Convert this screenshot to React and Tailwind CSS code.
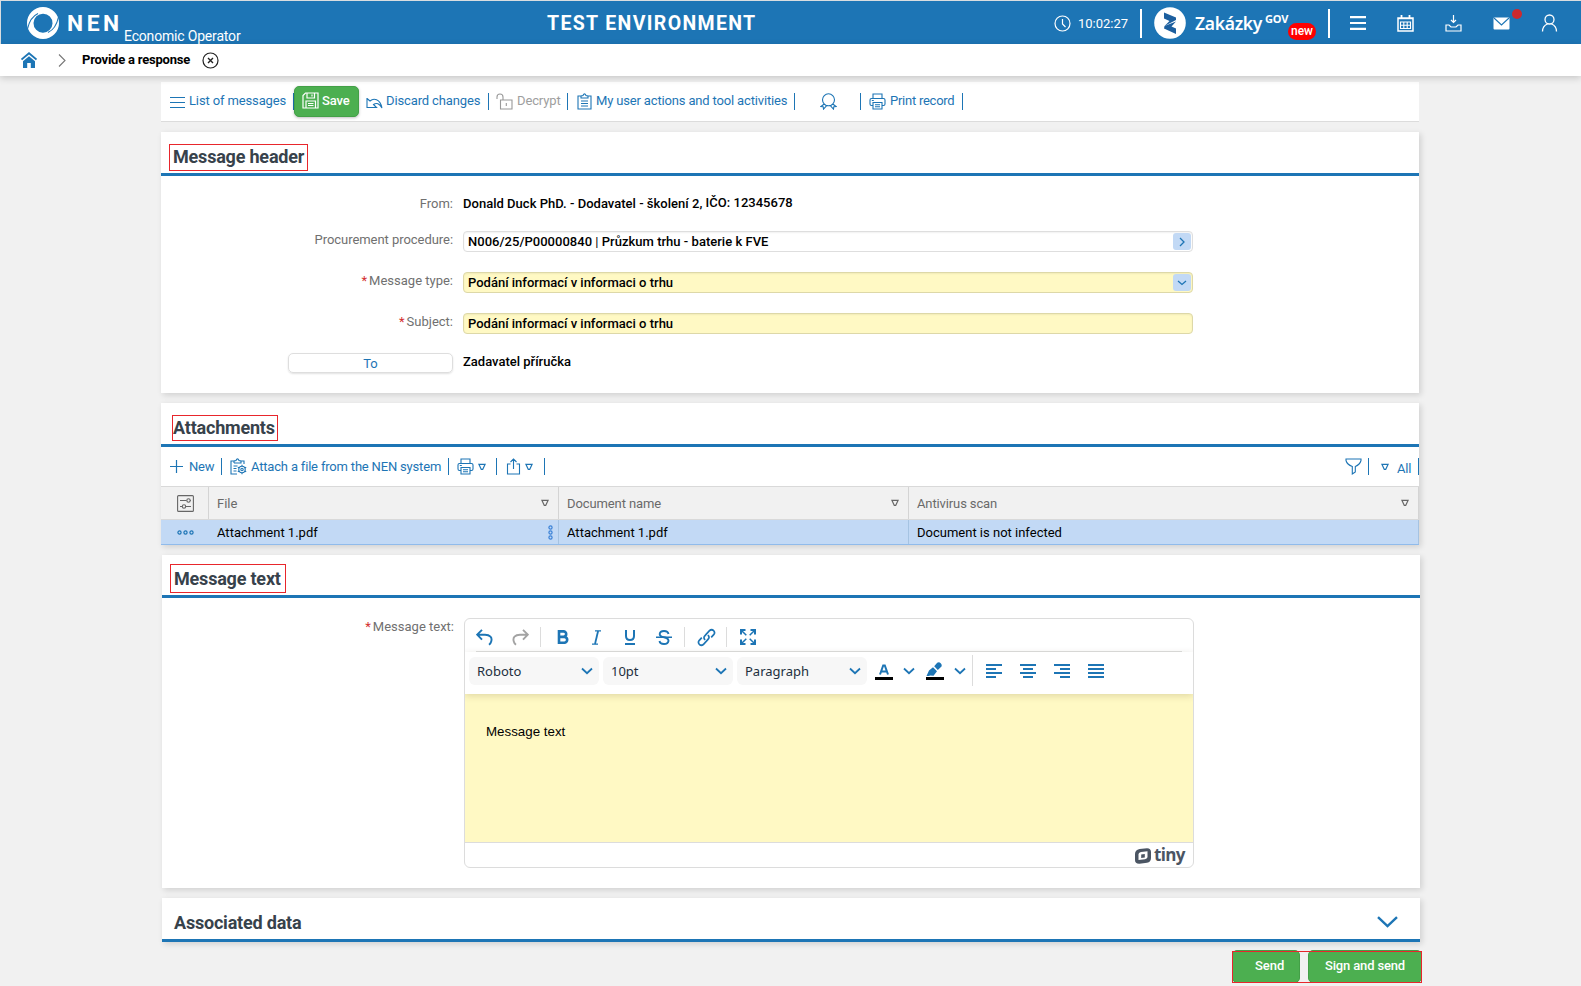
import React from "react";

const BLUE = "#1d75b5";

function Icon({ w, h, color = BLUE, sw = 1.2, className = "", children }) {
  return (
    <svg
      width={w}
      height={h}
      viewBox={`0 0 ${w} ${h}`}
      fill="none"
      stroke={color}
      strokeWidth={sw}
      className={`block shrink-0 ${className}`}
    >
      {children}
    </svg>
  );
}

const Sep = ({ className = "" }) => <div className={`h-[17px] w-px shrink-0 bg-[#1d75b5] ${className}`} />;

const Triangle = ({ color = BLUE, className = "" }) => (
  <Icon w={8} h={8} color={color} className={className}>
    <path d="M.9 1.300h6.200L4.700 6.400H3.300z" />
  </Icon>
);

const Printer = () => (
  <Icon w={17} h={17} sw={1.1}>
    <path d="M4 5.500V1h9v4.500M4 12.500H2.500Q1 12.500 1 11V7Q1 5.500 2.500 5.500h12Q16 5.500 16 7v4q0 1.500-1.500 1.500H13M4 9.500h9V16H4zM6 11.800h5M6 13.800h5M2.800 7.500h2" />
  </Icon>
);

const Chevron = ({ className = "" }) => (
  <Icon w={12} h={8} sw={1.8} className={className}>
    <path d="M1 1.500l5 4.700 5-4.700" />
  </Icon>
);

function TopBar() {
  return (
    <header className="flex h-[44px] items-start border-t border-l border-[#d9dde0] bg-[#1d75b5] text-white">
      <Icon w={34} h={34} className="mt-[5px] ml-[25px]" sw={0}>
        <path
          fill="#fff"
          fillRule="evenodd"
          d="M17 1a16 16 0 1 0 0 32a16 16 0 1 0 0-32zM17.200 7.700a9.500 9.500 0 1 1-.4 19a9.500 9.500 0 1 1 .4-19z"
        />
        <path d="M1.500 23C3 16 5.500 10.500 12 7.500M32.500 11C31 18 28.500 23.500 22 26.500" stroke={BLUE} strokeWidth="1.100" />
      </Icon>
      <div className="mt-[8px] ml-[7px] w-[57px] text-[22.800px] leading-[30px] font-bold tracking-[3.600px]">NEN</div>
      <div className="mt-[26px] w-[423px] text-[14px] leading-[19px] tracking-[-0.180px]">Economic Operator</div>
      <div className="mt-[9px] w-[507px] text-[19.500px] leading-[28px] font-bold tracking-[1.350px] whitespace-nowrap">TEST ENVIRONMENT</div>
      <Icon w={17} h={17} color="#fff" className="mt-[14px]">
        <circle cx="8.500" cy="8.500" r="7.500" />
        <path d="M8.500 4v5l3 3" />
      </Icon>
      <div className="mt-[13px] ml-[7px] w-[62px] text-[13px] leading-[20px]">10:02:27</div>
      <div className="mt-[8px] h-[29px] w-[2px] bg-white" />
      <Icon w={32} h={32} className="mt-[6px] ml-[12px]" sw={0}>
        <circle cx="16" cy="16" r="15.800" fill="#fff" />
        <path d="M10 5.500l12 5v2.500l-11.500 6L15.500 14 10 11.500zM10.500 19L22 14.500l-4.500 5 4.500 2V27l-12-5.500z" fill="#1c5f9f" />
      </Icon>
      <div className="mt-[9px] ml-[9px] w-[70px] font-['Noto_Sans'] text-[17.500px] leading-[26px] font-semibold tracking-[-0.300px]">Zakázky</div>
      <div className="mt-[10px] w-[24px] font-['Noto_Sans'] text-[11px] leading-[16px] font-bold tracking-[-0.200px]">GOV</div>
      <div className="mt-[22px] -ml-px w-[28px] rounded-full bg-[#f00] text-center text-[12px] leading-[17px] font-medium">new</div>
      <div className="mt-[8px] ml-[12px] h-[29px] w-[2px] bg-white" />
      <Icon w={16} h={16} color="#fff" sw={2.200} className="mt-[14px] ml-[20px]">
        <path d="M0 2.200h16M0 8h16M0 13.800h16" />
      </Icon>
      <Icon w={17} h={17} color="#fff" sw={1.100} className="mt-[14px] ml-[31px]">
        <path d="M1 3h15v13H1zM1 3.500h15" strokeWidth="1.500" />
        <path d="M4.500 0v3M12.500 0v3" strokeWidth="1.800" />
        <path d="M3.500 7h10v6.500h-10zM3.500 10.200h10M6.800 7v6.500M10.200 7v6.500" />
      </Icon>
      <Icon w={17} h={17} color="#fff" sw={1.200} className="mt-[14px] ml-[31px]">
        <path d="M8.500 0v7.500M6 5l2.500 2.500L11 5M1 10h3l2 2h5l2-2h3v6H1z" />
      </Icon>
      <div className="relative mt-[16px] ml-[31px]">
        <Icon w={17} h={13} sw={1.100}>
          <rect x=".5" y=".5" width="16" height="12" rx="1" fill="#fff" stroke="none" />
          <path d="M1 1l7.500 7L16 1" />
        </Icon>
        <div className="absolute -top-[8px] left-[19px] size-[10px] rounded-full bg-[#cd2a2f]" />
      </div>
      <Icon w={17} h={18} color="#fff" sw={1.300} className="mt-[13px] ml-[31px]">
        <circle cx="8.500" cy="5.500" r="4.500" />
        <path d="M1.500 17.500c0-4 2.500-6.500 5-7.500M15.500 17.500c0-4-2.500-6.500-5-7.500" />
      </Icon>
    </header>
  );
}

function Breadcrumb() {
  return (
    <nav className="relative flex h-[32px] items-center bg-white shadow-[0_2px_7px_rgba(0,0,0,0.18)]">
      <Icon w={16} h={16} className="ml-[21px]" sw={1.800}>
        <path d="M.5 7.500L8 1.200l7.500 6.300" />
        <path d="M8 4.300l6 5V16H9.800v-5H6.200v5H2V9.300z" fill={BLUE} stroke="none" />
      </Icon>
      <Icon w={8} h={13} color="#777" sw={1.100} className="ml-[21px]">
        <path d="M1 .5l6 6-6 6" />
      </Icon>
      <div className="ml-[16px] w-[120px] text-[13px] font-bold tracking-[-0.220px] whitespace-nowrap text-black">Provide a response</div>
      <Icon w={17} h={17} color="#222" sw={1.200}>
        <circle cx="8.500" cy="8.500" r="7.500" />
        <path d="M6 6l5 5M11 6l-5 5" strokeWidth="1.400" />
      </Icon>
    </nav>
  );
}

function RecordToolbar() {
  return (
    <div className="mt-[6px] flex h-[40px] w-[1258px] items-center border-b border-[#dcdcdc] bg-white pb-[1px] text-[13px] tracking-[-0.130px] whitespace-nowrap text-[#1d75b5]">
      <Icon w={15} h={12} className="mt-px ml-[9px]">
        <path d="M0 1.500h15M0 6.500h15M0 11.500h15" />
      </Icon>
      <div className="ml-[4px] w-[104px]">List of messages</div>
      <Sep />
      <div className="flex h-[31px] w-[65px] items-center rounded-[5px] border border-[#43a047] bg-[#4caf50] pl-[7px] font-medium text-white shadow-[0_1px_3px_rgba(0,0,0,0.25)]">
        <Icon w={17} h={17} color="#fff" sw={1.200} className="-mt-[2px]">
          <path d="M3.500 1H16v15H1V3.500zM5 1v5h7.500V1M10 2.500v2M4 16V9h9.500v7M6 11.500h5.500M6 13.500h5.500" />
        </Icon>
        <span className="ml-[3px]">Save</span>
      </div>
      <Icon w={17} h={12} sw={1.100} className="mt-[3px] ml-[7px]">
        <path d="M1 1v9.500h6M1 1.500l3 2.500C7.500 1 14 1.500 16 11 13.500 6.500 10.500 5.500 7.500 7.500L10.500 10.500H7" />
      </Icon>
      <div className="ml-[3px] w-[102px]">Discard changes</div>
      <Sep />
      <Icon w={17} h={17} color="#999" sw={1.100} className="ml-[7px]">
        <path d="M4.500 7h11.500v9H4.500zM7 7V4q0-3-3-3T1 4v2M10.300 10v3" />
      </Icon>
      <div className="ml-[4px] w-[50px] text-[#9e9e9e]">Decrypt</div>
      <Sep />
      <Icon w={15} h={17} sw={1.100} className="ml-[9px]">
        <path d="M4 3H1v13h13V3h-3M4 5V3l2-.5Q7.500-.8 9 2.500l2 .5v2zM4 8h7M4 10.500h7M4 13h7" />
      </Icon>
      <div className="ml-[4px] w-[198px] tracking-[-0.160px]">My user actions and tool activities</div>
      <Sep />
      <Icon w={17} h={17} sw={1.100} className="ml-[25px]">
        <path d="M4.200 11A6 6 0 1 1 12.800 11M4.200 11L1 13.500l2.200.3.300 2.300 3-3.300zM12.800 11L16 13.500l-2.200.3-.3 2.300-3-3.300zM5.800 12.300q2.700.900 5.400 0" />
      </Icon>
      <div className="w-[23px]" />
      <Sep />
      <div className="ml-[8px]"><Printer /></div>
      <div className="ml-[4px] w-[72px] tracking-[-0.250px]">Print record</div>
      <Sep />
    </div>
  );
}

function PanelTitle({ children, height = "h-[44px]", className = "" }) {
  return (
    <div className={`flex items-start border-b-[3px] border-[#1d75b5] ${height}`}>
      <h2 className={`border border-[#e8262c] text-[18px] font-bold tracking-[-0.200px] whitespace-nowrap text-[#37424b] ${className}`}>
        {children}
      </h2>
    </div>
  );
}

const PANEL = "w-[1258px] bg-white shadow-[2px_2px_6px_rgba(0,0,0,0.14)]";

const Label = ({ required, children, className = "" }) => (
  <div className={`w-[292px] shrink-0 text-right text-[13px] leading-[16px] text-[#707070] ${className}`}>
    {required && <span className="mr-[2px] text-[#d32f2f]">*</span>}
    {children}:
  </div>
);

function MessageHeader() {
  const field = "ml-[10px] flex h-[21px] w-[730px] items-center rounded-[4px] border pr-[1px] pl-[4px] text-[13px] font-medium text-black";
  return (
    <section className={`mt-[10px] h-[261px] ${PANEL}`}>
      <PanelTitle className="mt-[12px] ml-[8px] h-[27px] w-[139px] pl-[3px] leading-[24px]">Message header</PanelTitle>
      <div className="flex h-[55px] items-start pt-[20px]">
        <Label>From</Label>
        <div className="ml-[10px] text-[13px] leading-[16px] font-medium tracking-[0.020px] text-black">Donald Duck PhD. - Dodavatel - školení 2<span className="relative -top-px">, IČO: 12345678</span></div>
      </div>
      <div className="flex h-[41px] items-start">
        <Label className="mt-[1px] tracking-[-0.050px]">Procurement procedure</Label>
        <div className={`${field} border-[#dedede] shadow-[inset_0_1px_2px_rgba(0,0,0,0.06)]`}>
          <span className="grow tracking-[0.020px]">N006/25/P00000840 <span className="font-normal">|</span> Průzkum trhu - baterie k FVE</span>
          <div className="flex h-[17px] w-[18px] items-center justify-center rounded-[3px] bg-[#c2d9f5]">
            <Icon w={6} h={10} sw={1.300}><path d="M1 1l4 4-4 4" /></Icon>
          </div>
        </div>
      </div>
      <div className="flex h-[41px] items-start">
        <Label required className="mt-[1px]">Message type</Label>
        <div className={`${field} border-[#ddd8a8] bg-[#fff9c4] shadow-[inset_0_1px_2px_rgba(0,0,0,0.06)]`}>
          <span className="grow">Podání informací v informaci o trhu</span>
          <div className="flex h-[17px] w-[18px] items-center justify-center rounded-[3px] bg-[#c2d9f5]">
            <Icon w={10} h={6} sw={1.300}><path d="M1 1l4 3.500L9 1" /></Icon>
          </div>
        </div>
      </div>
      <div className="flex h-[40px] items-start">
        <Label required className="mt-[1px]">Subject</Label>
        <div className={`${field} border-[#ddd8a8] bg-[#fff9c4] shadow-[inset_0_1px_2px_rgba(0,0,0,0.06)]`}>Podání informací v informaci o trhu</div>
      </div>
      <div className="flex items-start">
        <div className="ml-[127px] flex h-[20px] w-[165px] items-center justify-center rounded-[5px] border border-[#dedede] pt-[2px] text-[13px] text-[#1d75b5] shadow-[0_1px_2px_rgba(0,0,0,0.12)]">To</div>
        <div className="mt-px ml-[10px] text-[13px] leading-[16px] font-medium text-black">Zadavatel příručka</div>
      </div>
    </section>
  );
}

function Attachments() {
  const head = "flex items-center border-r border-[#d4d4d4] pl-[8px] pr-[9px]";
  const cell = "flex items-center border-r border-[#a5c3e2] pl-[8px]";
  return (
    <section className={`mt-[10px] h-[142px] text-[13px] whitespace-nowrap ${PANEL}`}>
      <PanelTitle className="mt-[12px] ml-[11px] h-[26px] w-[106px] leading-[24px]">Attachments</PanelTitle>
      <div className="flex h-[39px] items-center tracking-[-0.150px] text-[#1d75b5]">
        <Icon w={13} h={13} className="ml-[9px]"><path d="M6.500 0v13M0 6.500h13" /></Icon>
        <div className="ml-[6px] w-[32px]">New</div>
        <Sep />
        <Icon w={17} h={17} sw={1.100} className="ml-[8px]">
          <path d="M4 3H1v13h6M4 5V3l2-.5Q7.500-.8 9 2.500l2 .5v2H4M11 3h3v3M3.500 8h4M3.500 10.500h3M3.500 13h3" />
          <circle cx="12" cy="11.500" r="3.200" />
          <circle cx="12" cy="11.500" r="1.200" />
          <path d="M12 6.800v1.500M12 14.700v1.500M7.800 9.200l1.500.8M14.700 13l1.500.8M7.800 13.800l1.500-.8M14.700 10l1.500-.8" />
        </Icon>
        <div className="ml-[4px] w-[197px] tracking-[-0.180px]">Attach a file from the NEN system</div>
        <Sep />
        <div className="ml-[8px]"><Printer /></div>
        <Triangle className="ml-[4px]" />
        <Sep className="ml-[10px]" />
        <Icon w={15} h={17} sw={1.100} className="ml-[9px]">
          <path d="M4.500 6H1.500v10h12V6h-3M7.500 11V1M4.500 4l3-3 3 3" />
        </Icon>
        <Triangle className="ml-[4px]" />
        <Sep className="ml-[11px]" />
        <div className="grow" />
        <Icon w={17} h={17} sw={1.100}>
          <path d="M1 1h15v1.500Q15 6.500 10.300 8.500V14l-3 2V8.500Q2 6.500 1 2.500z" />
        </Icon>
        <Sep className="ml-[6px]" />
        <Triangle className="ml-[12px]" />
        <div className="mt-[4px] ml-[8px] w-[21px]">All</div>
        <Sep />
      </div>
      <div className="grid h-[34px] w-[1258px] grid-cols-[48px_350px_350px_510px] border-t border-b border-[#d9d9d9] bg-[#f1f1f1] text-[#6a6a6a]">
        <div className="flex items-center justify-center border-r border-[#d4d4d4] pl-px">
          <Icon w={17} h={17} color="#666" sw={1.100}>
            <rect x=".6" y=".6" width="15.800" height="15.800" rx="1" />
            <path d="M3 5.500h6.500M13.200 5.500H14M3 11.500h2M8.500 11.500H14" />
            <circle cx="11.500" cy="5.500" r="1.700" />
            <circle cx="7" cy="11.500" r="1.700" />
          </Icon>
        </div>
        <div className={head}><span className="grow pt-[2px]">File</span><Triangle color="#666" /></div>
        <div className={head}><span className="grow pt-[2px] tracking-[-0.100px]">Document name</span><Triangle color="#666" /></div>
        <div className={head}><span className="grow pt-[2px] tracking-[-0.120px]">Antivirus scan</span><Triangle color="#666" /></div>
      </div>
      <div className="grid h-[25px] w-[1258px] grid-cols-[48px_350px_350px_510px] border-b border-[#90bbeb] bg-[#c2d9f5] text-black">
        <div className="flex items-center justify-center">
          <Icon w={17} h={5}>
            <circle cx="2.500" cy="2.500" r="1.600" />
            <circle cx="8.500" cy="2.500" r="1.600" />
            <circle cx="14.500" cy="2.500" r="1.600" />
          </Icon>
        </div>
        <div className={`${cell} pr-[5px]`}>
          <span className="grow pt-[2px]">Attachment 1.pdf</span>
          <Icon w={5} h={15} color="#3b82d6">
            <circle cx="2.500" cy="2.500" r="1.600" />
            <circle cx="2.500" cy="7.500" r="1.600" />
            <circle cx="2.500" cy="12.500" r="1.600" />
          </Icon>
        </div>
        <div className={`${cell} pt-[2px]`}>Attachment 1.pdf</div>
        <div className={`${cell} pt-[2px]`}>Document is not infected</div>
      </div>
    </section>
  );
}

const Select = ({ children }) => (
  <div className="mr-[4px] flex h-[28px] w-[130px] items-center rounded-[6px] bg-[#f7f7f7] pr-[6px] pl-[8px] font-['Noto_Sans'] text-[13px] text-[#222f3e]">
    <span className="grow pt-px">{children}</span>
    <Chevron />
  </div>
);

function Editor() {
  return (
    <div className="ml-[10px] flex h-[250px] w-[730px] flex-col overflow-hidden rounded-[6px] border border-[#dcdcdc] bg-white">
      <div className="mx-[11px] flex h-[33px] shrink-0 items-center border-b border-[#dedede] pt-[4px]">
        <Icon w={17} h={17} sw={1.900}>
          <path d="M6 .8L1.200 5.700 6 10.600M1.200 5.700H9c5 0 7.500 3 6.200 6.800-.3 1.300-1.200 2.500-2.200 3.200" />
        </Icon>
        <Icon w={17} h={17} color="#a3a3a3" sw={1.900} className="ml-[19px]">
          <path d="M11 .8l4.800 4.900L11 10.600M15.800 5.700H8c-5 0-7.500 3-6.200 6.800.3 1.300 1.200 2.500 2.200 3.200" />
        </Icon>
        <div className="ml-[11px] h-[20px] w-px bg-[#dcdcdc]" />
        <Icon w={12} h={14} sw={2.600} className="ml-[16px]">
          <path d="M2 1.400h4.500a2.700 2.700 0 0 1 0 5.400H2M2 6.900h5.300a2.900 2.900 0 0 1 0 5.800H2M2 .1v13.900" />
        </Icon>
        <Icon w={9} h={15} sw={1.300} className="ml-[23px]">
          <path d="M3 .9h6M0 14.100h6" />
          <path d="M6.100 1L3 14" strokeWidth="1.800" />
        </Icon>
        <Icon w={12} h={15} sw={2} className="ml-[23px]">
          <path d="M2 0v6q0 4 4 4t4-4V0M1 13.900h10" />
        </Icon>
        <Icon w={16} h={15} sw={1.900} className="ml-[20px]">
          <path d="M12.500 4Q12 1 8 1T3.700 4Q3.700 6.500 8 7.200T12.500 10.800Q12 14 8 14T3.500 11" />
          <path d="M0 7.300h16" strokeWidth="1.500" />
        </Icon>
        <div className="ml-[12px] h-[20px] w-px bg-[#dcdcdc]" />
        <Icon w={19} h={19} sw={1.700} className="ml-[12px]">
          <path d="M8.200 11.800q-2.500-2 0-4.500l4.500-4.800q2-1.600 4 .2 1.700 2 0 4l-2.500 2.600M10.800 7.200q2.500 2 0 4.500l-4.500 4.800q-2 1.600-4-.2-1.700-2 0-4l2.500-2.600" />
        </Icon>
        <div className="ml-[10px] h-[20px] w-px bg-[#dcdcdc]" />
        <Icon w={16} h={16} sw={2} className="ml-[13px]">
          <path d="M1 5.500V1h4.500M10.500 1H15v4.500M15 10.500V15h-4.500M5.500 15H1v-4.500" />
          <path d="M2 2l4.300 4.300M14 2L9.700 6.300M2 14l4.300-4.300M14 14L9.700 9.700" strokeWidth="1.500" />
        </Icon>
      </div>
      <div className="relative flex h-[42px] shrink-0 items-start pt-[5px] pl-[4px] shadow-[0_2px_7px_rgba(60,50,0,0.16)]">
        <Select>Roboto</Select>
        <Select>10pt</Select>
        <Select>Paragraph</Select>
        <Icon w={18} h={16} sw={2} className="mt-[7px] ml-[4px]">
          <path d="M5 10.500L8.200 1.500h1.600L13 10.500M6.200 7.500h5.600" />
          <path d="M0 14.500h18" stroke="#000" strokeWidth="3" />
        </Icon>
        <Chevron className="mt-[10px] ml-[10px]" />
        <Icon w={18} h={18} sw={0} className="mt-[5px] ml-[11px]">
          <path d="M.5 14l2.500-5.500 4-3.300 4 4-3.500 4.500-3.500-.2L3 14zM8.200 4.200l3-3.500q2-1 3.500.5t.8 3.300l-3.700 3.600z" fill={BLUE} />
          <path d="M0 16.500h18" stroke="#000" strokeWidth="3" />
        </Icon>
        <Chevron className="mt-[10px] ml-[10px]" />
        <div className="-mt-[2px] ml-[6px] h-[31px] w-px bg-[#dcdcdc]" />
        <Icon w={16} h={16} sw={2} className="mt-[6px] ml-[13px]">
          <path d="M0 2h16M0 6h10M0 10h16M0 14h10" />
        </Icon>
        <Icon w={16} h={16} sw={2} className="mt-[6px] ml-[18px]">
          <path d="M0 2h16M3 6h10M0 10h16M3 14h10" />
        </Icon>
        <Icon w={16} h={16} sw={2} className="mt-[6px] ml-[18px]">
          <path d="M0 2h16M6 6h10M0 10h16M6 14h10" />
        </Icon>
        <Icon w={16} h={16} sw={2} className="mt-[6px] ml-[18px]">
          <path d="M0 2h16M0 6h16M0 10h16M0 14h16" />
        </Icon>
      </div>
      <div className="grow bg-[#fff9c4] pt-[30px] pl-[21px] font-['Liberation_Sans'] text-[13.330px] leading-[16px] text-black">Message text</div>
      <div className="flex h-[25px] shrink-0 items-center border-t border-[#dcdcdc] pt-px pl-[670px]">
        <Icon w={16} h={16} sw={0}>
          <path
            fill="#4b5563"
            fillRule="evenodd"
            d="M4.500 1L12 .2Q16 .2 16 4v6q0 4-4 4.800l-7.500 1Q0 16 0 12V6Q0 2 4.500 1zM6 4Q4 4.500 3.500 6v6l6.500-.8q2-.4 2.500-2V3.300zM6.200 6.500l3.600-.6v3.600l-3.600.6z"
          />
        </Icon>
        <span className="ml-[3px] pb-[2px] font-['Open_Sans'] text-[17px] leading-[20px] font-bold tracking-[-0.700px] text-[#4b5563]">tiny</span>
      </div>
    </div>
  );
}

export default function App() {
  return (
    <div className="h-[986px] w-[1581px] overflow-hidden bg-[#f1f1f1] font-[Roboto,sans-serif]">
      <TopBar />
      <Breadcrumb />
      <main className="ml-[161px]">
        <RecordToolbar />
        <MessageHeader />
        <Attachments />
        <div className="ml-px">
          <section className={`mt-[10px] h-[333px] ${PANEL}`}>
            <PanelTitle height="h-[43px]" className="mt-[9px] ml-[8px] h-[29px] w-[116px] pl-[3px] leading-[27px]">Message text</PanelTitle>
            <div className="flex items-start pt-[20px]">
              <Label required className="mt-px">Message text</Label>
              <Editor />
            </div>
          </section>
          <section className={`mt-[10px] h-[44px] ${PANEL}`}>
            <div className="flex h-[44px] items-start justify-between border-b-[3px] border-[#1d75b5] pr-[22px] pl-[12px]">
              <h2 className="pt-[11px] text-[18px] leading-[27px] font-bold tracking-[-0.200px] text-[#37424b]">Associated data</h2>
              <Icon w={21} h={12} sw={2.400} className="mt-[18px]"><path d="M1 1.200l9.500 9L20 1.200" /></Icon>
            </div>
          </section>
          <div className="relative mt-[8px] ml-[1070px] flex w-[190px] justify-between text-[13px] font-medium text-white">
            <div className="flex h-[33px] w-[68px] items-center rounded-[5px] border border-[#43a047] bg-[#4caf50] pb-[2px] pl-[22px]">Send</div>
            <div className="flex h-[33px] w-[114px] items-center justify-center rounded-[5px] border border-[#43a047] bg-[#4caf50] pb-[2px] tracking-[-0.150px]">Sign and send</div>
            <div className="absolute top-px left-0 h-[32px] w-[190px] border border-[#e8262c]" />
          </div>
        </div>
      </main>
    </div>
  );
}
